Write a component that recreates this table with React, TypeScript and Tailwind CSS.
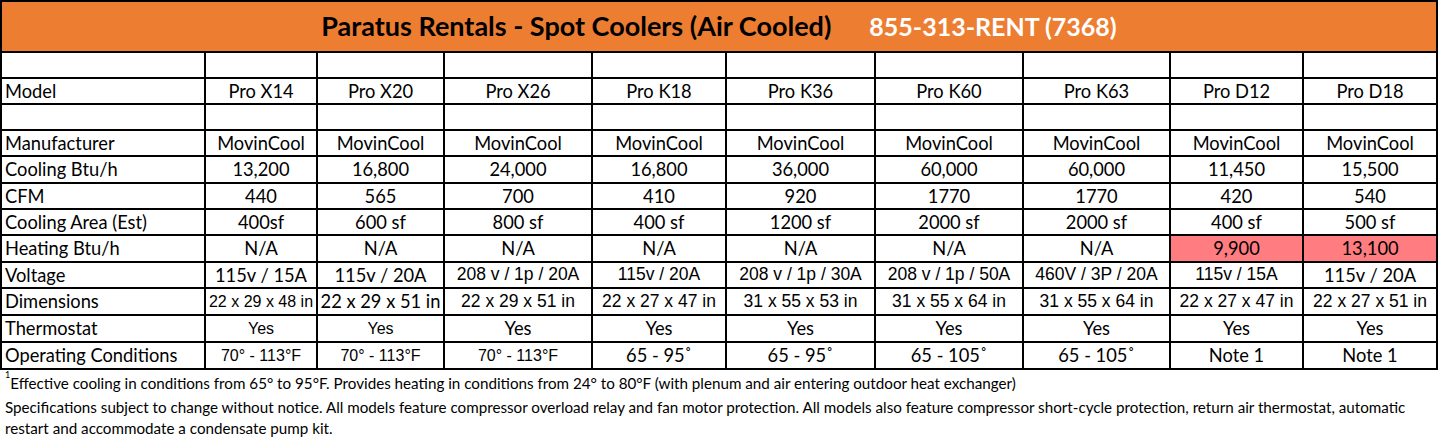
import React from "react";

type Cell = string | { t: string; arial?: boolean; size?: string; pink?: boolean };

const cal = "font-['Lato','Noto_Sans',sans-serif] text-[18.3px]";
const ari = "font-['Liberation_Sans',Arial,sans-serif]";

const widths = ["w-[204px]", "w-[112px]", "w-[127px]", "w-[148px]", "w-[134px]", "w-[149px]", "w-[148px]", "w-[147px]", "w-[133px]", "w-[134px]"];

const A = (t: string, size = "text-[17.5px]"): Cell => ({ t, arial: true, size });

const rows: { label: string; h: string; cells: Cell[] }[] = [
  { label: "", h: "h-[26px]", cells: ["", "", "", "", "", "", "", "", ""] },
  { label: "Model", h: "h-[26px]", cells: ["Pro X14", "Pro X20", "Pro X26", "Pro K18", "Pro K36", "Pro K60", "Pro K63", "Pro D12", "Pro D18"] },
  { label: "", h: "h-[26px]", cells: ["", "", "", "", "", "", "", "", ""] },
  { label: "Manufacturer", h: "h-[26px]", cells: Array(9).fill("MovinCool") },
  { label: "Cooling Btu/h", h: "h-[27px]", cells: ["13,200", "16,800", "24,000", "16,800", "36,000", "60,000", "60,000", "11,450", "15,500"] },
  { label: "CFM", h: "h-[26px]", cells: ["440", "565", "700", "410", "920", "1770", "1770", "420", "540"] },
  { label: "Cooling Area (Est)", h: "h-[26px]", cells: ["400sf", "600 sf", "800 sf", "400 sf", "1200 sf", "2000 sf", "2000 sf", "400 sf", "500 sf"] },
  {
    label: "Heating Btu/h",
    h: "h-[27px]",
    cells: ["N/A", "N/A", "N/A", "N/A", "N/A", "N/A", "N/A", { t: "9,900", pink: true }, { t: "13,100", pink: true }]
  },
  {
    label: "Voltage",
    h: "h-[26px]",
    cells: ["115v / 15A", "115v / 20A", A("208 v / 1p / 20A"), A("115v / 20A"), A("208 v / 1p / 30A"), A("208 v / 1p / 50A"), A("460V / 3P / 20A"), A("115v / 15A"), "115v / 20A"]
  },
  {
    label: "Dimensions",
    h: "h-[27px]",
    cells: [A("22 x 29 x 48 in", "text-[16px]"), "22 x 29 x 51 in", A("22 x 29 x 51 in"), A("22 x 27 x 47 in"), A("31 x 55 x 53 in"), A("31 x 55 x 64 in"), A("31 x 55 x 64 in"), A("22 x 27 x 47 in"), A("22 x 27 x 51 in")]
  },
  { label: "Thermostat", h: "h-[27px]", cells: [A("Yes", "text-[16px]"), A("Yes", "text-[16px]"), "Yes", "Yes", "Yes", "Yes", "Yes", "Yes", "Yes"] },
  {
    label: "Operating Conditions",
    h: "h-[27px]",
    cells: [A("70° - 113°F", "text-[16px]"), A("70° - 113°F", "text-[16px]"), A("70° - 113°F", "text-[16px]"), "65 - 95˚", "65 - 95˚", "65 - 105˚", "65 - 105˚", "Note 1", "Note 1"]
  }
];

function ValueCell({ cell }: { cell: Cell }) {
  const c = typeof cell === "string" ? { t: cell } : cell;
  const font = c.arial ? `${ari} ${c.size}` : cal;
  return (
    <td className={`border-2 border-black p-0 text-center leading-none whitespace-nowrap text-black ${font} ${c.pink ? "bg-[#ff7c80]" : ""}`}>
      {c.t}
    </td>
  );
}

export default function App() {
  return (
    <div className="w-[1439px] h-[437px] bg-white overflow-hidden">
      <table className="w-[1438px] table-fixed border-collapse">
        <colgroup>
          {widths.map((w, i) => (
            <col key={i} className={w} />
          ))}
        </colgroup>
        <tbody>
          <tr className="h-[51px]">
            <td colSpan={10} className="border-2 border-black bg-[#ed7d31] p-0 text-center font-['Lato','Noto_Sans',sans-serif] font-bold whitespace-nowrap">
              <span className="text-[27px] text-black">Paratus Rentals - Spot Coolers (Air Cooled)</span>
              <span className="ml-[38px] text-[25px] text-white">855-313-RENT (7368)</span>
            </td>
          </tr>
          {rows.map((row, i) => (
            <tr key={i} className={row.h}>
              <td className={`border-2 border-black py-0 pl-[3px] text-left leading-none whitespace-nowrap text-black ${cal}`}>{row.label}</td>
              {row.cells.map((cell, j) => (
                <ValueCell key={j} cell={cell} />
              ))}
            </tr>
          ))}
        </tbody>
      </table>
      <div className="pl-[5px] pt-[2px] font-['Lato','Noto_Sans',sans-serif] text-[15.2px] text-black whitespace-nowrap">
        <p className="leading-[22px]">
          <sup className="text-[9px] align-super">1</sup>Effective cooling in conditions from 65° to 95°F. Provides heating in conditions from 24° to 80°F (with plenum and air entering outdoor heat exchanger)
        </p>
        <p className="mt-[2px] leading-[22px]">
          Specifications subject to change without notice. All models feature compressor overload relay and fan motor protection. All models also feature compressor short-cycle protection, return air thermostat, automatic
        </p>
        <p className="leading-[21px]">restart and accommodate a condensate pump kit.</p>
      </div>
    </div>
  );
}
